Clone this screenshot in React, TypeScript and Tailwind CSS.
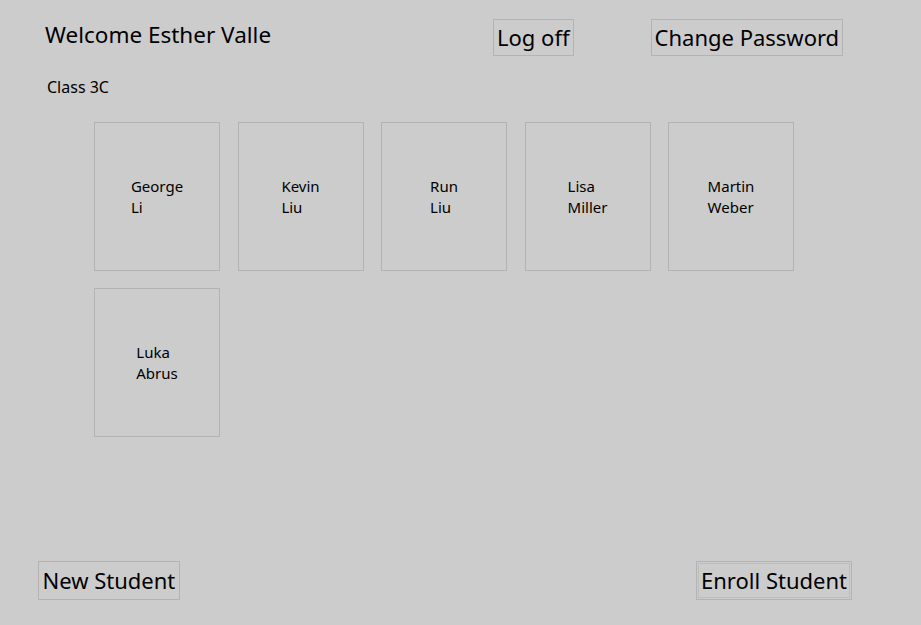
import React from "react";

const STUDENTS = [
	["George", "Li"],
	["Kevin", "Liu"],
	["Run", "Liu"],
	["Lisa", "Miller"],
	["Martin", "Weber"],
	["Luka", "Abrus"],
];

const font = { fontFamily: '"Segoe UI", "Noto Sans", "Open Sans", sans-serif' };

export default function App() {
	return (
		<div
			className="flex h-[625px] w-[921px] flex-col bg-[#cccccc] text-black"
			style={font}
		>
			{/* header */}
			<div className="flex items-start pt-[19px]">
				<div className="w-[493px] pl-[45px] pt-[1px] text-[22.5px] leading-[30px]">
					Welcome Esther Valle
				</div>
				<button
					type="button"
					className="h-[37px] border border-[#b3b3b3] px-[3px] text-[22px] leading-[33px]"
				>
					Log off
				</button>
				<button
					type="button"
					className="ml-[77px] h-[37px] border border-[#b3b3b3] px-[3px] text-[22px] leading-[33px]"
				>
					Change Password
				</button>
			</div>

			<div className="mt-[20px] pl-[47px] text-[16px] leading-[22px]">Class 3C</div>

			{/* student tiles */}
			<div className="mt-[24px] grid grid-cols-[repeat(5,126px)] gap-x-[17.5px] gap-y-[17px] pl-[94px]">
				{STUDENTS.map(([first, last]) => (
					<div
						key={first + last}
						className="flex h-[149px] items-center justify-center border border-[#b3b3b3]"
					>
						<div className="text-[15px] leading-[21px]">
							<div>{first}</div>
							<div>{last}</div>
						</div>
					</div>
				))}
			</div>

			{/* footer */}
			<div className="mt-auto flex items-end justify-between pb-[25px] pl-[38px] pr-[69px]">
				<button
					type="button"
					className="h-[39px] border border-[#b3b3b3] px-[3.5px] text-[22px] leading-[35px]"
				>
					New Student
				</button>
				<div className="border border-[#b3b3b3] p-px">
					<button
						type="button"
						className="h-[35px] border border-[#bdbdbd] px-[2px] text-[22px] leading-[31px]"
					>
						Enroll Student
					</button>
				</div>
			</div>
		</div>
	);
}
